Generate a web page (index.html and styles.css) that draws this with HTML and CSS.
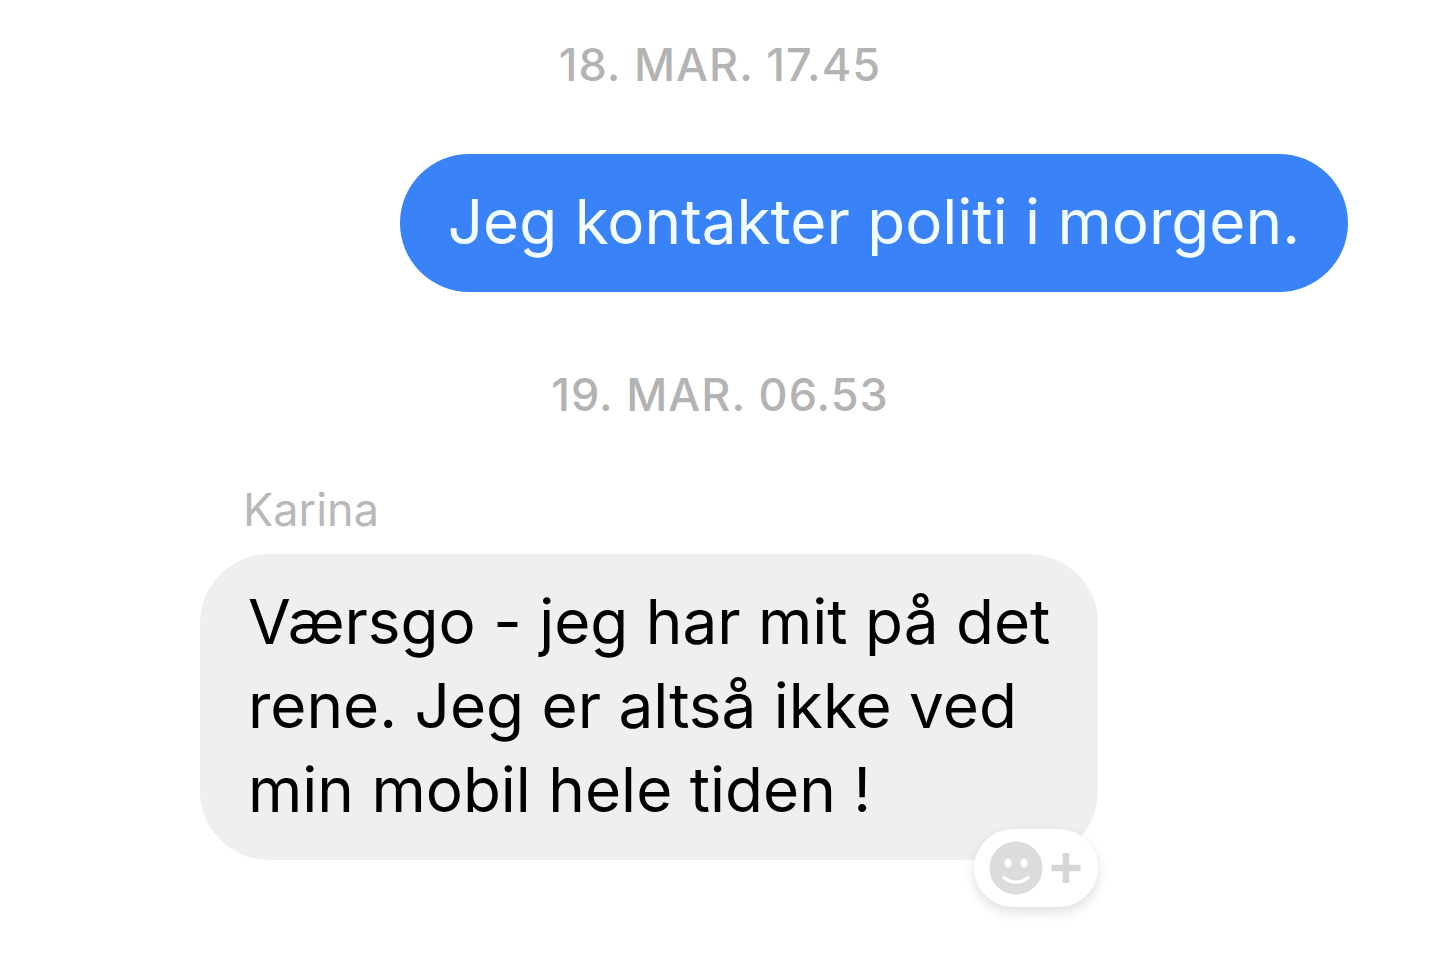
FILE: index.html
```html
<!DOCTYPE html>
<html lang="da">
<head>
<meta charset="UTF-8">
<meta name="viewport" content="width=device-width, initial-scale=1.0">
<title>Chat</title>
<link rel="stylesheet" href="styles.css">
</head>
<body>

<main class="chat">
  <time class="timestamp">18. MAR. 17.45</time>

  <div class="message sent">
    <p class="bubble">Jeg kontakter politi i morgen.</p>
  </div>

  <time class="timestamp">19. MAR. 06.53</time>

  <div class="message received">
    <span class="sender">Karina</span>
    <div class="bubble">
      <p>Værsgo - jeg har mit på det<br>rene. Jeg er altså ikke ved<br>min mobil hele tiden !</p>
      <button class="react" type="button" aria-label="Reager">
        <svg width="94" height="56" viewBox="0 0 94 56" aria-hidden="true">
          <circle cx="27" cy="28" r="26.5" fill="#dcdcdc"/>
          <ellipse cx="19" cy="23" rx="3.5" ry="4.5" fill="#fff"/>
          <ellipse cx="35" cy="23" rx="3.5" ry="4.5" fill="#fff"/>
          <path d="M15 37.5Q27 47 39 37.5" fill="none" stroke="#fff" stroke-width="3.5" stroke-linecap="round"/>
          <path d="M77 13V43M62.500 28H91.500" stroke="#d6d6d6" stroke-width="6.500"/>
        </svg>
      </button>
    </div>
  </div>
</main>

</body>
</html>
```
FILE: styles.css
```css
body {
  margin: 0;
  background: #fff;
  font-family: Inter, "Liberation Sans", sans-serif;
}

p {
  margin: 0;
}

.chat {
  display: flex;
  flex-direction: column;
  padding: 37px 92px 98px 200px;
}

/* Centered on the window, not on the message column */
.timestamp {
  margin-left: -108px;
  color: #b3b3b3;
  font-size: 45px;
  font-weight: 500;
  line-height: 56px;
  letter-spacing: 1px;
  text-align: center;
}

.message {
  display: flex;
  flex-direction: column;
}

.bubble {
  padding: 26px 48px 28px;
  border-radius: 69px;
  font-size: 62px;
  line-height: 84px;
}

.sent {
  align-items: flex-end;
  margin: 61px 0 75px;
}

.sent .bubble {
  background: #3a82f7;
  color: #f3fdff;
}

.received {
  align-items: flex-start;
  margin-top: 59px;
}

.sender {
  margin-left: 43px;
  color: #b8b8b8;
  font-size: 45px;
  line-height: 56px;
}

.received .bubble {
  position: relative;
  margin-top: 16px;
  background: #efefef;
  color: #000;
}

.react {
  position: absolute;
  right: 0;
  bottom: -47px;
  display: flex;
  padding: 11px 15px;
  border: 0;
  border-radius: 39px;
  background: #fff;
  box-shadow: 0 5px 12px rgba(0, 0, 0, 0.13);
  cursor: pointer;
}
```
